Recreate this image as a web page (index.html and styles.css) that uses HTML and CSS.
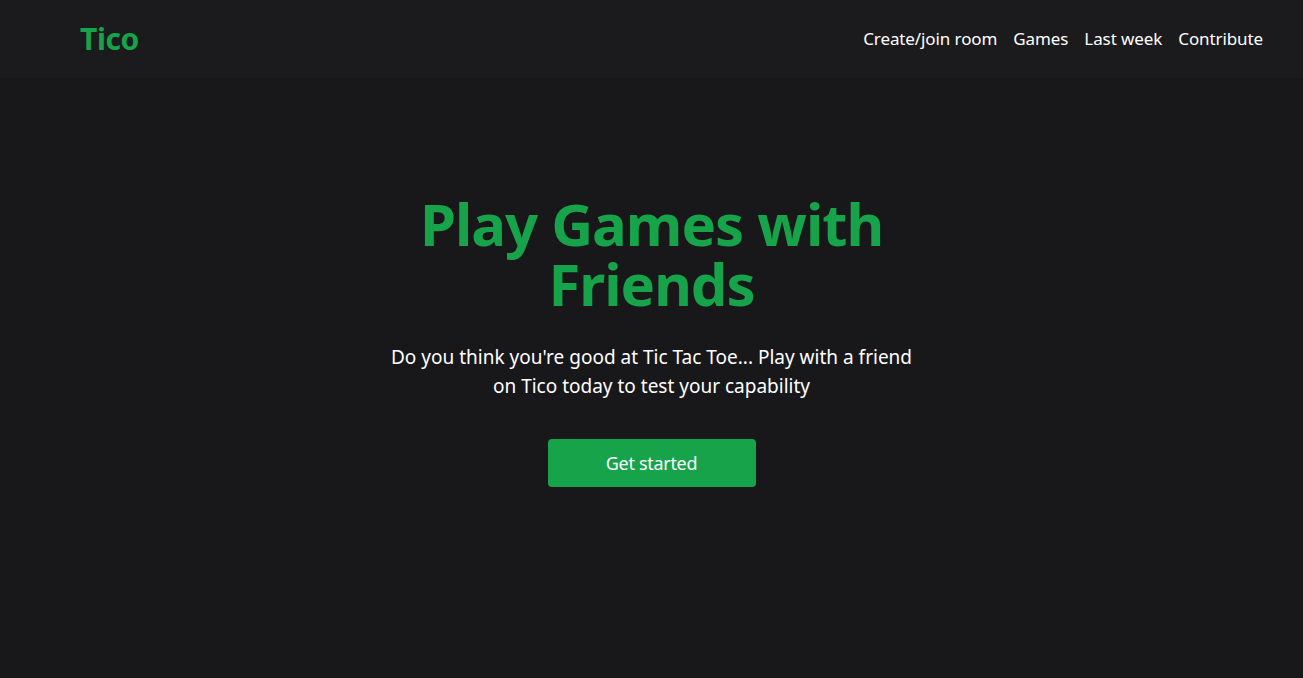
FILE: index.html
```html
<!DOCTYPE html>
<html lang="en">
<head>
<meta charset="utf-8">
<title>Tico</title>
<link rel="stylesheet" href="styles.css">
</head>
<body>
<header class="header">
  <a class="logo" href="#">Tico</a>
  <nav class="nav">
    <a href="#">Create/join room</a>
    <a href="#">Games</a>
    <a href="#">Last week</a>
    <a href="#">Contribute</a>
  </nav>
</header>
<main class="hero">
  <h1 class="title">Play Games with Friends</h1>
  <p class="lead">Do you think you're good at Tic Tac Toe... Play with a friend on Tico today to test your capability</p>
  <a class="cta" href="#">Get started</a>
</main>
</body>
</html>
```
FILE: styles.css
```css
* { box-sizing: border-box; }
html, body { margin: 0; height: 100%; }
body {
  background: #18181b;
  color: #fff;
  font-family: "Noto Sans", "Open Sans", sans-serif;
}
a { text-decoration: none; color: inherit; }
.header {
  height: 78px;
  background: #1b1b1e;
  display: flex;
  align-items: center;
  justify-content: space-between;
  padding: 0 40px 2px 80px;
}
.logo {
  color: #16a34a;
  font-weight: 700;
  font-size: 30px;
  letter-spacing: -0.4px;
}
.nav {
  display: flex;
  gap: 16px;
  font-size: 17px;
  letter-spacing: -0.1px;
}
.hero {
  display: flex;
  flex-direction: column;
  align-items: center;
  text-align: center;
  padding-top: 116px;
}
.title {
  margin: 0;
  max-width: 520px;
  color: #16a34a;
  font-size: 58px;
  line-height: 60px;
  font-weight: 700;
  letter-spacing: -1px;
}
.lead {
  margin: 29px 0 0;
  max-width: 530px;
  font-size: 19px;
  line-height: 29px;
}
.cta {
  margin-top: 38px;
  width: 208px;
  height: 48px;
  background: #16a34a;
  border-radius: 4px;
  display: flex;
  align-items: center;
  justify-content: center;
  font-size: 18px;
  letter-spacing: -0.3px;
}
```
